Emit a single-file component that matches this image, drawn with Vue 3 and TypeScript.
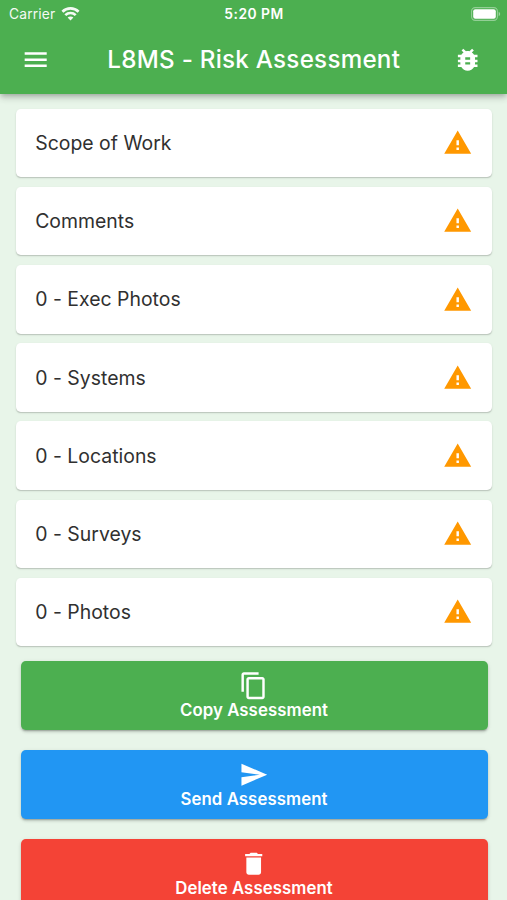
<script setup lang="ts">
interface Section { label: string }
interface Action { kind: 'copy' | 'send' | 'delete'; label: string; path: string }

const sections: Section[] = [
  { label: 'Scope of Work' },
  { label: 'Comments' },
  { label: '0 - Exec Photos' },
  { label: '0 - Systems' },
  { label: '0 - Locations' },
  { label: '0 - Surveys' },
  { label: '0 - Photos' },
]

const actions: Action[] = [
  {
    kind: 'copy',
    label: 'Copy Assessment',
    path: 'M16 1H4c-1.1 0-2 .9-2 2v14h2V3h12V1zm3 4H8c-1.1 0-2 .9-2 2v14c0 1.1.9 2 2 2h11c1.1 0 2-.9 2-2V7c0-1.1-.9-2-2-2zm0 16H8V7h11v14z',
  },
  { kind: 'send', label: 'Send Assessment', path: 'M2.01 21L23 12 2.01 3 2 10l15 2-15 2z' },
  {
    kind: 'delete',
    label: 'Delete Assessment',
    path: 'M6 19c0 1.1.9 2 2 2h8c1.1 0 2-.9 2-2V7H6v12zM19 4h-3.5l-1-1h-5l-1 1H5v2h14V4z',
  },
]
</script>

<template>
  <div class="screen">
    <header class="top">
      <div class="status">
        <div class="carrier">
          <span>Carrier</span>
          <svg class="wifi" viewBox="0 0 18 14" fill="none" stroke="#fff" stroke-width="2.7">
            <path d="M.9 4.7C5.5.3 12.5.3 17.1 4.7" />
            <path d="M3.8 8.1c2.9-2.8 7.5-2.8 10.4 0" />
            <path d="M6.1 10.5c1.6-1.5 4.2-1.5 5.8 0L9 13.6z" fill="#fff" stroke="none" />
          </svg>
        </div>
        <span class="time">5:20 PM</span>
        <svg class="battery" viewBox="0 0 30 14">
          <rect x=".6" y=".6" width="25.8" height="12.8" rx="3.6" fill="none" stroke="#fff" stroke-opacity=".4" stroke-width="1.1" />
          <rect x="2.2" y="2.2" width="22.6" height="9.6" rx="2.1" fill="#fff" />
          <path d="M27.7 4.8c2 .8 2 3.6 0 4.4z" fill="#fff" fill-opacity=".45" />
        </svg>
      </div>
      <div class="bar">
        <svg class="icon" viewBox="0 0 24 24"><path d="M3 18h18v-2H3v2zm0-5h18v-2H3v2zm0-7v2h18V6H3z" /></svg>
        <h1>L8MS - Risk Assessment</h1>
        <svg class="icon" viewBox="0 0 24 24">
          <path d="M20 8h-2.81c-.45-.78-1.07-1.45-1.82-1.96L17 4.41 15.59 3l-2.17 2.17C12.96 5.06 12.49 5 12 5c-.49 0-.96.06-1.41.17L8.41 3 7 4.41l1.62 1.63C7.88 6.55 7.26 7.22 6.81 8H4v2h2.09c-.05.33-.09.66-.09 1v1H4v2h2v1c0 .34.04.67.09 1H4v2h2.81c1.04 1.79 2.97 3 5.19 3s4.15-1.21 5.19-3H20v-2h-2.09c.05-.33.09-.66.09-1v-1h2v-2h-2v-1c0-.34-.04-.67-.09-1H20V8zm-6 8h-4v-2h4v2zm0-4h-4v-2h4v2z" />
        </svg>
      </div>
    </header>

    <main>
      <ul class="sections">
        <li v-for="s in sections" :key="s.label" class="card">
          <span>{{ s.label }}</span>
          <svg class="icon warn" viewBox="0 0 24 24"><path d="M1 21h22L12 2 1 21zm12-3h-2v-2h2v2zm0-4h-2v-4h2v4z" /></svg>
        </li>
      </ul>
      <div class="actions">
        <button v-for="a in actions" :key="a.kind" type="button" class="action" :class="a.kind">
          <svg class="icon" viewBox="0 0 24 24"><path :d="a.path" /></svg>
          <span>{{ a.label }}</span>
        </button>
      </div>
    </main>
  </div>
</template>

<style>
body {
  margin: 0;
  background: #e8f5e9;
  overflow: hidden;
}
</style>

<style scoped>
.screen {
  height: 900px;
  overflow: hidden;
  background: #e8f5e9;
  font-family: Inter, Roboto, sans-serif;
}
.top {
  position: relative;
  box-sizing: border-box;
  height: 93.6px;
  background: #4caf50;
  color: #fff;
  box-shadow: 0 2px 5px -1px rgba(0, 0, 0, 0.24), 0 5px 6px rgba(0, 0, 0, 0.1), 0 1px 12px rgba(0, 0, 0, 0.06);
}
.status {
  display: grid;
  grid-template-columns: 1fr auto 1fr;
  align-items: center;
  height: 27px;
  padding: 0 6px 0 9px;
}
.carrier {
  display: flex;
  align-items: center;
  gap: 6px;
  font-size: 13.8px;
  letter-spacing: 0.15px;
  opacity: 0.94;
}
.wifi {
  width: 19px;
  height: 14px;
}
.time {
  margin-right: 2px;
  font-size: 13.8px;
  font-weight: 600;
  letter-spacing: 0.5px;
}
.battery {
  width: 30px;
  height: 14px;
  justify-self: end;
}
.bar {
  display: flex;
  align-items: center;
  justify-content: space-between;
  height: 66px;
  padding: 0 24.5px 0 20.5px;
}
h1 {
  margin: 0 0 0 4.5px;
  font-size: 24.2px;
  font-weight: 500;
  letter-spacing: 0.25px;
  line-height: 30px;
  white-space: nowrap;
}
.icon {
  display: block;
  width: 29.4px;
  height: 29.4px;
  flex: none;
  fill: currentColor;
}
.sections {
  display: grid;
  gap: 9.7px;
  margin: 0;
  padding: 15.1px 14.7px 0 15.7px;
  list-style: none;
}
.card {
  display: flex;
  align-items: center;
  justify-content: space-between;
  box-sizing: border-box;
  height: 68.5px;
  padding: 0 19.5px;
  border-radius: 4.9px;
  background: #fff;
  color: #303030;
  font-size: 19.4px;
  letter-spacing: 0.02px;
  box-shadow: 0 1.5px 1px -0.5px rgba(0, 0, 0, 0.15), 0 1px 3px rgba(0, 0, 0, 0.08);
}
.warn {
  color: #ff9800;
}
.actions {
  display: grid;
  gap: 19.6px;
  padding: 14.2px 19.5px 0 20.5px;
}
.action {
  display: flex;
  flex-direction: column;
  align-items: center;
  box-sizing: border-box;
  height: 69.6px;
  padding: 10px 0 0;
  border: 0;
  border-radius: 4.9px;
  color: #fff;
  font-family: inherit;
  font-size: 16.8px;
  font-weight: 600;
  letter-spacing: 0.07px;
  line-height: 20px;
  box-shadow: 0 2.5px 1.5px -1.5px rgba(0, 0, 0, 0.2), 0 2px 3px rgba(0, 0, 0, 0.13), 0 1px 5px rgba(0, 0, 0, 0.08);
}
.copy {
  background: #4caf50;
}
.send {
  background: #2196f3;
}
.delete {
  background: #f44336;
}
</style>
